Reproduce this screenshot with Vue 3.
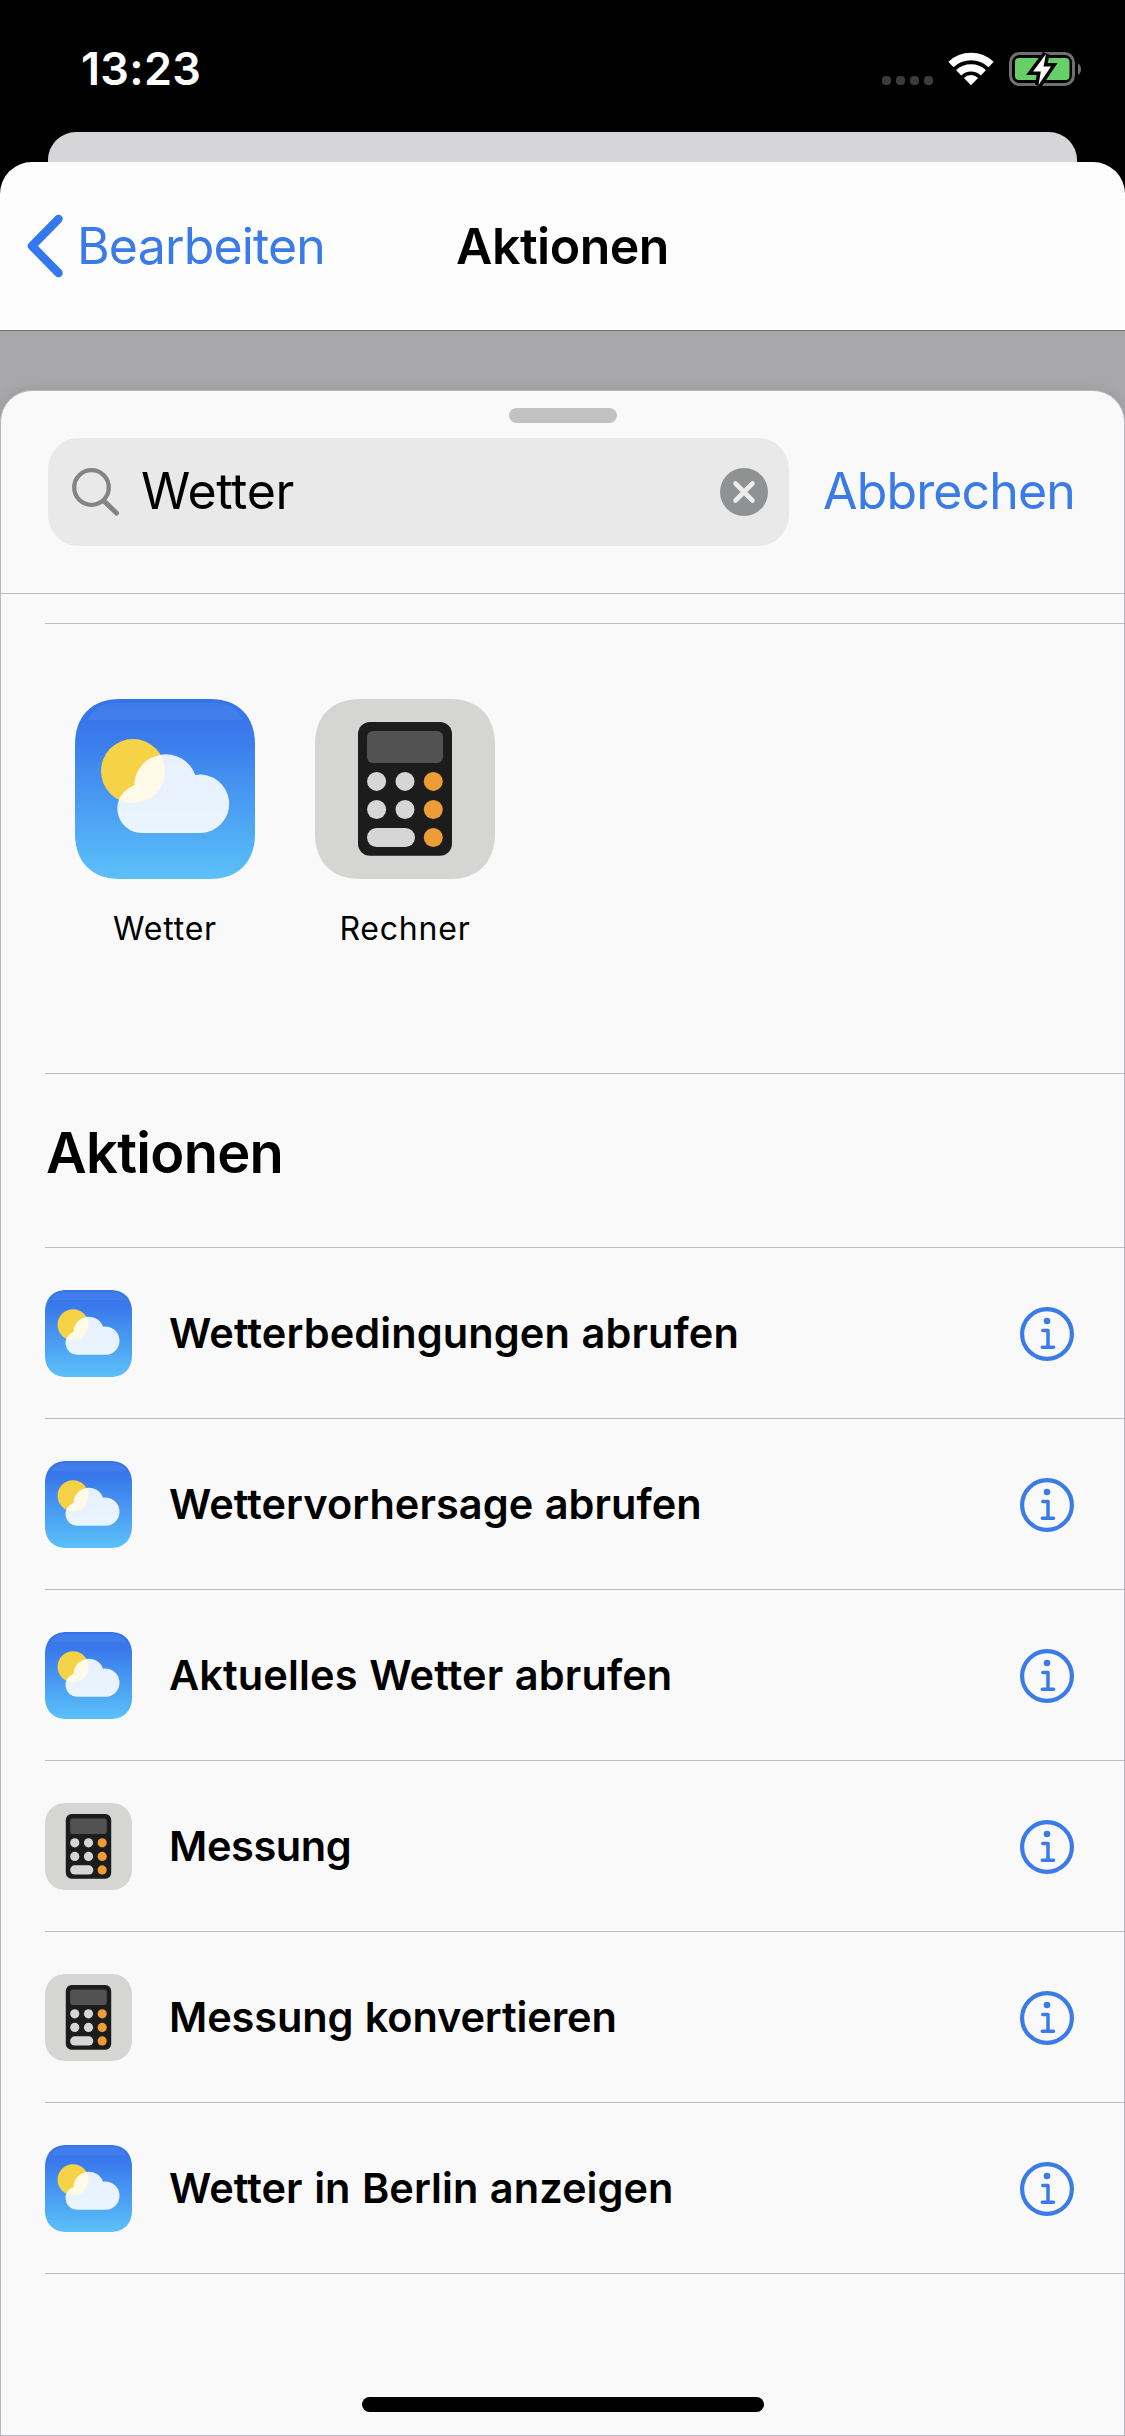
<script setup>
const apps = [
  { name: 'Wetter', icon: 'weather' },
  { name: 'Rechner', icon: 'calc' },
]

const actions = [
  { title: 'Wetterbedingungen abrufen', icon: 'weather', tracking: 0.1 },
  { title: 'Wettervorhersage abrufen', icon: 'weather', tracking: 0.04 },
  { title: 'Aktuelles Wetter abrufen', icon: 'weather', tracking: 0.12 },
  { title: 'Messung', icon: 'calc', tracking: -0.4 },
  { title: 'Messung konvertieren', icon: 'calc', tracking: -0.12 },
  { title: 'Wetter in Berlin anzeigen', icon: 'weather', tracking: 0.04 },
]
</script>

<template>
  <div class="screen">
    <svg class="defs" width="0" height="0" aria-hidden="true">
      <defs>
        <linearGradient id="sky" x1="0" y1="0" x2="0" y2="1">
          <stop offset="0" stop-color="#3473e9" />
          <stop offset="0.2" stop-color="#3a7aec" />
          <stop offset="1" stop-color="#5bc1f9" />
        </linearGradient>
        <symbol id="weather" viewBox="0 0 180 180">
          <path d="M0 45C0 17 17 0 45 0H135C163 0 180 17 180 45V135C180 163 163 180 135 180H45C17 180 0 163 0 135Z" fill="url(#sky)" />
          <path d="M13 21Q20 4 40 4H140Q160 4 168 21Z" fill="#fff" opacity="0.06" />
          <circle cx="58" cy="72" r="32" fill="#f6d247" />
          <path d="M66.5 134A24.4 24.4 0 0 1 59.2 86.4A31.5 31.5 0 0 1 120.3 76A29.2 29.2 0 1 1 126 134Z" fill="#fff" opacity="0.88" />
        </symbol>
        <symbol id="calc" viewBox="0 0 180 180">
          <path d="M0 45C0 17 17 0 45 0H135C163 0 180 17 180 45V135C180 163 163 180 135 180H45C17 180 0 163 0 135Z" fill="#d5d5d3" />
          <rect x="43" y="23" width="94" height="133.7" rx="12" fill="#1c1c1c" />
          <rect x="52" y="32" width="76" height="32" rx="6" fill="#525252" />
          <g fill="#d6d6d6">
            <circle cx="61.6" cy="82.4" r="9.5" />
            <circle cx="90" cy="82.4" r="9.5" />
            <circle cx="61.6" cy="110.5" r="9.5" />
            <circle cx="90" cy="110.5" r="9.5" />
            <rect x="52" y="129" width="48" height="19" rx="9.5" />
          </g>
          <g fill="#ee9c35">
            <circle cx="118.3" cy="82.4" r="9.5" />
            <circle cx="118.3" cy="110.5" r="9.5" />
            <circle cx="118.3" cy="138.5" r="9.5" />
          </g>
        </symbol>
      </defs>
    </svg>

    <header class="status">
      <span class="time">13:23</span>
      <div class="indicators">
        <svg class="dots" width="51" height="9" viewBox="0 0 51 9" fill="#3c3c3c">
          <rect v-for="n in 4" :key="n" :x="(n - 1) * 14" y="0" width="9" height="9" rx="3.8" />
        </svg>
        <svg class="wifi" width="46" height="34" viewBox="0 0 46 34">
          <g fill="none" stroke="#fff" stroke-width="7.4">
            <path d="M2.9 12.5A29.2 29.2 0 0 1 43.1 12.5" />
            <path d="M10.6 20.8A18 18 0 0 1 35.4 20.8" />
          </g>
          <path d="M23 33.2L15.9 26A10.2 10.2 0 0 1 30.1 26Z" fill="#fff" />
        </svg>
        <svg class="battery" width="74" height="36" viewBox="0 0 74 36">
          <rect x="1.5" y="2.5" width="63" height="31" rx="9" fill="none" stroke="#707070" stroke-width="3" />
          <path d="M69 12.5C73 15 73 21.5 69 24Z" fill="#707070" />
          <rect x="6" y="7" width="54.5" height="22" rx="4" fill="#66cf67" />
          <path d="M37 3L24 20.5H31.8L29.5 34L42 15.5H34.5Z" fill="#fff" stroke="#000" stroke-width="7" paint-order="stroke" stroke-linejoin="miter" />
        </svg>
      </div>
    </header>

    <div class="back-sheet"></div>

    <section class="front-sheet">
      <nav class="navbar">
        <div class="back">
          <svg width="38" height="66" viewBox="0 0 38 66" fill="none" stroke="#3478f0" stroke-width="8.5" stroke-linecap="round" stroke-linejoin="round">
            <path d="M33.5 6L7 33L33.5 60" />
          </svg>
          <span>Bearbeiten</span>
        </div>
        <h1>Aktionen</h1>
        <div></div>
      </nav>

      <div class="dimmed">
        <main class="panel">
          <div class="grabber"></div>
          <div class="search-row">
            <div class="search">
              <svg width="49" height="49" viewBox="0 0 49 49" fill="none" stroke="#848484" stroke-linecap="round">
                <circle cx="19.5" cy="19.500" r="17.3" stroke-width="4.300" />
                <path d="M32 33L44.5 45" stroke-width="5" />
              </svg>
              <span class="query">Wetter</span>
              <svg class="clear" width="48" height="48" viewBox="0 0 48 48">
                <circle cx="24" cy="24" r="24" fill="#8f9192" />
                <path d="M15.5 15.5L32.5 32.5M32.5 15.5L15.5 32.5" stroke="#ececec" stroke-width="4.6" stroke-linecap="round" />
              </svg>
            </div>
            <span class="cancel">Abbrechen</span>
          </div>

          <div class="results">
            <div class="apps">
              <div v-for="app in apps" :key="app.name" class="app">
                <svg width="180" height="180"><use :href="'#' + app.icon" /></svg>
                <span>{{ app.name }}</span>
              </div>
            </div>
            <h2>Aktionen</h2>
            <ul>
              <li v-for="action in actions" :key="action.title">
                <svg width="87" height="87"><use :href="'#' + action.icon" /></svg>
                <span :style="{ letterSpacing: action.tracking + 'px' }">{{ action.title }}</span>
                <svg class="info" width="54" height="54" viewBox="0 0 54 54" fill="none" stroke="#3a7be8">
                  <circle cx="27" cy="27" r="24.900" stroke-width="4.200" />
                  <circle cx="27" cy="14" r="3.3" fill="#3a7be8" stroke="none" />
                  <path d="M22.8 23.5H28V40M22.3 40.2H33.5" stroke-width="3.5" stroke-linecap="round" stroke-linejoin="round" />
                </svg>
              </li>
            </ul>
          </div>

          <div class="home"></div>
        </main>
      </div>
    </section>
  </div>
</template>

<style>
body {
  margin: 0;
  background: #000;
}
</style>

<style scoped>
.screen {
  display: flex;
  flex-direction: column;
  width: 1125px;
  height: 2436px;
  overflow: hidden;
  background: #000;
  color: #000;
  font-family: Inter, "Liberation Sans", sans-serif;
}

.defs {
  position: absolute;
}

.status {
  display: flex;
  justify-content: space-between;
  height: 132px;
  box-sizing: border-box;
  padding: 51px 42px 0 81px;
}

.time {
  height: 36px;
  color: #fff;
  font-size: 45px;
  font-weight: 600;
  line-height: 36px;
  letter-spacing: 0.3px;
}

.indicators {
  display: flex;
  align-items: flex-start;
}

.dots {
  margin-top: 25px;
}

.wifi {
  margin: 1px 0 0 15px;
}

.battery {
  margin: 0 0 0 15px;
}

.back-sheet {
  height: 30px;
  margin: 0 48px;
  border-radius: 28px 28px 0 0;
  background: #d6d6d8;
}

.front-sheet {
  display: flex;
  flex: 1;
  flex-direction: column;
  overflow: hidden;
  border-radius: 32px 32px 0 0;
  background: #fdfdfd;
}

.navbar {
  display: grid;
  grid-template-columns: 1fr auto 1fr;
  align-items: center;
  height: 169px;
  box-sizing: border-box;
  border-bottom: 1px solid #707072;
}

.back {
  display: flex;
  align-items: center;
  padding-left: 25px;
  color: #3a7be8;
  font-size: 50px;
  letter-spacing: -0.85px;
}

.back span {
  margin-left: 14px;
}

h1 {
  margin: 0;
  font-size: 50px;
  font-weight: 600;
  letter-spacing: -0.5px;
}

.dimmed {
  display: flex;
  flex: 1;
  flex-direction: column;
  padding-top: 59px;
  background: #a8a8aa;
}

.panel {
  display: flex;
  flex: 1;
  flex-direction: column;
  align-items: center;
  box-sizing: border-box;
  border: 1px solid #b9b9bb;
  border-radius: 32px 32px 0 0;
  background: #f9f9f9;
  box-shadow: 0 0 14px rgba(0, 0, 0, 0.1);
}

.grabber {
  width: 108px;
  height: 15px;
  margin-top: 17px;
  border-radius: 8px;
  background: #c2c2c4;
}

.search-row {
  display: flex;
  align-items: center;
  align-self: stretch;
  height: 171px;
  box-sizing: border-box;
  padding: 15px 0 47px 47px;
  border-bottom: 1px solid #bdbdbf;
}

.search {
  display: flex;
  flex: none;
  align-items: center;
  width: 741px;
  height: 108px;
  box-sizing: border-box;
  padding: 0 21px 0 24px;
  border-radius: 31px;
  background: #e9e9e9;
}

.query {
  flex: 1;
  margin-left: 20px;
  padding-bottom: 3px;
  font-size: 50px;
  letter-spacing: -0.3px;
}

.cancel {
  margin-left: 34px;
  padding-bottom: 3px;
  color: #3a7be8;
  font-size: 50px;
  letter-spacing: -0.85px;
}

.results {
  align-self: stretch;
  flex: 1;
  padding: 29px 0 0 44px;
}

.apps {
  display: flex;
  gap: 60px;
  height: 451px;
  box-sizing: border-box;
  padding: 75px 0 0 30px;
  border-top: 1px solid #bdbdbf;
  border-bottom: 1px solid #bdbdbf;
}

.app {
  display: flex;
  flex-direction: column;
  align-items: center;
  width: 180px;
}

.app span {
  margin-top: 30px;
  font-size: 32px;
  line-height: 40px;
  letter-spacing: 0.8px;
}

h2 {
  display: flex;
  align-items: center;
  height: 174px;
  box-sizing: border-box;
  margin: 0;
  padding: 0 0 16px 1px;
  border-bottom: 1px solid #bdbdbf;
  font-size: 56px;
  font-weight: 600;
  letter-spacing: -0.7px;
}

ul {
  margin: 0;
  padding: 0;
  list-style: none;
}

li {
  display: flex;
  align-items: center;
  height: 171px;
  box-sizing: border-box;
  padding-right: 50px;
  border-bottom: 1px solid #bdbdbf;
  font-size: 41.5px;
  font-weight: 600;
  word-spacing: 1px;
}

li span {
  flex: 1;
  margin-left: 37px;
}

.info {
  margin-top: 2px;
}

.home {
  width: 402px;
  height: 15px;
  margin-bottom: 23px;
  border-radius: 8px;
  background: #000;
}
</style>
